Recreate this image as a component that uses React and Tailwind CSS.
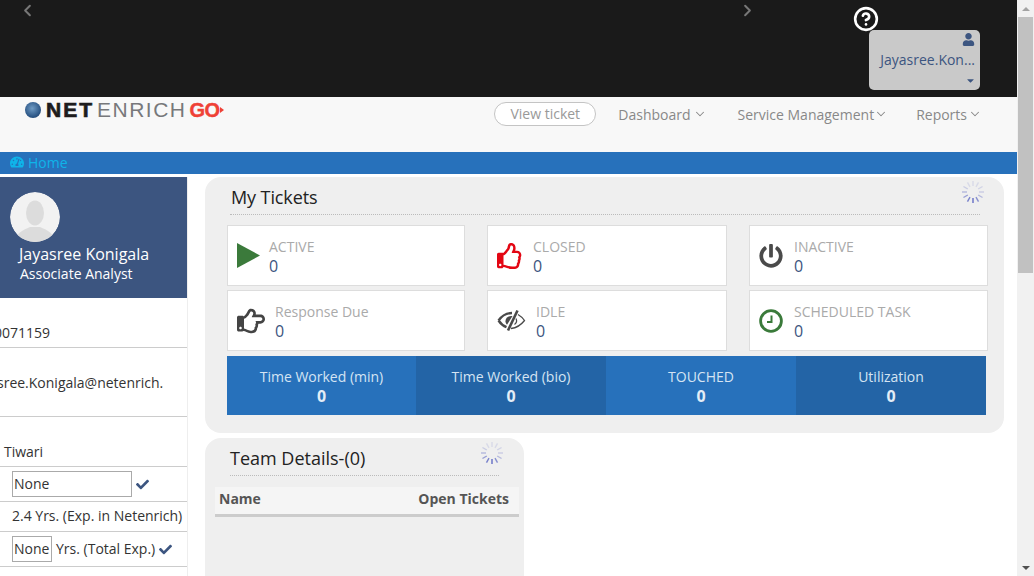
import React from 'react';
import { ChevronDown, ChevronLeft, ChevronRight, CircleHelp } from 'lucide-react';
import {
  FaCaretDown,
  FaCheck,
  FaPowerOff,
  FaRegHandPointRight,
  FaRegThumbsUp,
  FaTachometerAlt,
  FaUser,
} from 'react-icons/fa';

const font = { fontFamily: '"Open Sans", sans-serif' };

function Spinner() {
  const bars = [...Array(12).keys()];
  return (
    <svg width="24" height="24" viewBox="0 0 24 24" className="block">
      {bars.map((i) => (
        <line
          key={i}
          x1="12"
          y1="1"
          x2="12"
          y2="6"
          stroke="#5d68c4"
          strokeWidth="1.4"
          opacity={[0.15, 0.15, 0.2, 0.25, 0.4, 0.7, 0.95, 0.8, 0.6, 0.4, 0.25, 0.15][i]}
          transform={`rotate(${i * 30} 12 12)`}
        />
      ))}
    </svg>
  );
}

function ClockIcon() {
  return (
    <svg width="24" height="24" viewBox="0 0 24 24" fill="none" stroke="#3a7a3a">
      <circle cx="12" cy="12" r="10.4" strokeWidth="2.8" />
      <path d="M12.5 6.5v6.5H8" strokeWidth="2" />
    </svg>
  );
}

function PlayIcon() {
  return (
    <svg width="23" height="25" viewBox="0 0 23 25">
      <polygon points="0,0 23,12.5 0,25" fill="#3b7a3b" />
    </svg>
  );
}

function EyeSlashIcon() {
  return (
    <svg width="29" height="23" viewBox="0 0 29 23" fill="none" stroke="#4a4a4a">
      <path d="M1.5 11.5C5 6.500 10 4 15 4" strokeWidth="2.400" />
      <path d="M1.500 11.500C3.500 14.500 6.500 17 9.500 18.200" strokeWidth="2.400" />
      <path d="M21 5.500c2.500 1.500 4.800 3.500 6.500 6-3.500 4.500-8.500 7.500-13.500 8" strokeWidth="1.300" />
      <path d="M19 9.500c1 2 .5 4.500-1.500 6" strokeWidth="1.200" />
      <path d="M20.500 1.500L11 21.500" strokeWidth="2.600" />
      <path d="M15.500 7C11 6.500 8 9.500 8.500 13c.2 1.200.7 2 1.500 2.800z" fill="#4a4a4a" stroke="none" />
    </svg>
  );
}

function Avatar() {
  return (
    <svg width="50" height="50" viewBox="0 0 50 50" className="block rounded-full">
      <circle cx="25" cy="25" r="25" fill="#f2f2f2" />
      <ellipse cx="25" cy="21" rx="9" ry="12.500" fill="#dcdcdc" />
      <path d="M5 50c1-9 8-12 15-15h10c7 3 14 6 15 15z" fill="#dcdcdc" />
    </svg>
  );
}

function Logo() {
  return (
    <div className="flex items-center h-[17px] mt-[4px] ml-[25px] leading-none" style={{ fontFamily: '"Liberation Sans", sans-serif' }}>
      <span className="w-4 h-4 rounded-full bg-[radial-gradient(circle_at_45%_40%,#6f9bc4,#2b5585_65%,#1d3557)]" />
      <span className="ml-[5px] text-[21px] font-bold text-[#1e1c1d] tracking-[2px] [-webkit-text-stroke:0.7px_#1e1c1d]">NET</span>
      <span className="ml-[3px] text-[21px] text-[#77787b] tracking-[1.5px]">ENRICH</span>
      <span className="ml-[3px] text-[20px] font-bold text-[#ef4136] tracking-[-0.5px] [-webkit-text-stroke:0.4px_#ef4136]">GO</span>
      <span className="border-y-[3px] border-l-[4px] border-y-transparent border-l-[#ef4136]" />
    </div>
  );
}

function NavItem({ label, className }) {
  return (
    <span className={`flex items-center text-[14px] text-[#888] ${className}`}>
      {label}
      <ChevronDown size={14} strokeWidth={1.8} />
    </span>
  );
}

function Row({ height, className = '', children }) {
  return (
    <div className={`${height} border-b border-[#ccc] text-[14px] text-[#333] flex shrink-0 whitespace-nowrap overflow-hidden ${className}`}>
      {children}
    </div>
  );
}

function Sidebar() {
  return (
    <aside className="w-[188px] shrink-0 border-r border-[#eee] flex flex-col">
      <div className="h-[121px] bg-[#3c5580] text-white pt-[15px] pl-[10px]">
        <Avatar />
        <div className="ml-[9px] text-[16px] leading-[24px]">Jayasree Konigala</div>
        <div className="ml-[10px] text-[14px] leading-[15px]">Associate Analyst</div>
      </div>
      <Row height="h-[50px]" className="items-end pb-[4px]">
        <span className="-ml-[6px]">0071159</span>
      </Row>
      <Row height="h-[69px]" className="pt-[24px]">
        <span className="-ml-[3px]">sree.Konigala@netenrich.</span>
      </Row>
      <Row height="h-[50px]" className="items-end pb-[4px]">
        <span className="ml-[4px]">Tiwari</span>
      </Row>
      <Row height="h-[35px]" className="items-center pl-[12px] gap-[4px]">
        <span className="w-[120px] h-[26px] border border-[#aaa] pl-[1px] leading-[23px]">None</span>
        <FaCheck size={13} className="text-[#3c5580]" />
      </Row>
      <Row height="h-[30px]" className="items-center pl-[12px] pb-[2px]">
        2.4 Yrs. (Exp. in Netenrich)
      </Row>
      <Row height="h-[35px]" className="items-center pl-[12px] gap-[4px]">
        <span className="w-[40px] h-[26px] border border-[#aaa] pl-[1px] leading-[23px]">None</span>
        <span className="-mt-[2px]">Yrs. (Total Exp.)</span>
        <FaCheck size={13} className="text-[#3c5580]" />
      </Row>
    </aside>
  );
}

function TicketCard({ icon, iconWidth, label, value }) {
  return (
    <div className="bg-white border border-[#ddd] flex items-center pl-[9px]">
      <div className={`${iconWidth} shrink-0 flex items-center`}>{icon}</div>
      <div className="mt-[1px]">
        <div className="text-[14px] leading-[20px] text-[#aaa]">{label}</div>
        <div className="text-[16px] leading-[19px] font-medium text-[#3c5580]">{value}</div>
      </div>
    </div>
  );
}

function StatCell({ label, dark, width = 'flex-1' }) {
  return (
    <div className={`${width} flex flex-col items-center pt-[11px] ${dark ? 'bg-[#2364a6]' : 'bg-[#2771bb]'}`}>
      <div className="text-[14px] leading-[20px] font-medium text-[#d5e4f3]">{label}</div>
      <div className="text-[16px] leading-[18px] font-bold text-[#e3edf7]">0</div>
    </div>
  );
}

function PanelHeader({ title, width, titleClass = '', spinnerClass }) {
  return (
    <div className={`${width} ml-[25px] h-[38px] border-b border-dotted border-[#bbb] flex justify-between`}>
      <span className={`text-[18px] leading-[40px] text-[#222] ${titleClass}`}>{title}</span>
      <span className={`mt-[3px] ${spinnerClass}`}><Spinner /></span>
    </div>
  );
}

function MyTickets() {
  return (
    <section className="w-[799px] h-[256px] shrink-0 bg-[#efefef] rounded-[16px]">
      <PanelHeader title="My Tickets" width="w-[750px]" titleClass="pl-[1px] tracking-[-0.1px]" spinnerClass="-mr-[5px]" />
      <div className="ml-[22px] mt-[10px] grid grid-cols-[238px_240px_239px] grid-rows-[61px_61px] gap-x-[22px] gap-y-[4px]">
        <TicketCard icon={<PlayIcon />} iconWidth="w-[32px]" label="ACTIVE" value="0" />
        <TicketCard icon={<FaRegThumbsUp size={26} className="text-[#e30613]" />} iconWidth="w-[36px]" label="CLOSED" value="0" />
        <TicketCard icon={<FaPowerOff size={24} className="text-[#4a4a4a]" />} iconWidth="w-[35px]" label="INACTIVE" value="0" />
        <TicketCard icon={<FaRegHandPointRight size={28} className="text-[#444]" />} iconWidth="w-[38px]" label="Response Due" value="0" />
        <TicketCard icon={<EyeSlashIcon />} iconWidth="w-[39px]" label="IDLE" value="0" />
        <TicketCard icon={<ClockIcon />} iconWidth="w-[35px]" label="SCHEDULED TASK" value="0" />
      </div>
      <div className="ml-[22px] mt-[5px] w-[759px] h-[59px] flex">
        <StatCell label="Time Worked (min)" width="w-[189px]" />
        <StatCell label="Time Worked (bio)" dark />
        <StatCell label="TOUCHED" />
        <StatCell label="Utilization" dark />
      </div>
    </section>
  );
}

function TeamDetails() {
  return (
    <section className="w-[319px] h-[200px] shrink-0 bg-[#efefef] rounded-t-[16px]">
      <PanelHeader title="Team Details-(0)" width="w-[269px]" spinnerClass="-mr-[5px]" />
      <div className="ml-[10px] mr-[5px] mt-[11px] h-[30px] bg-[#f5f5f5] border-b-[3px] border-[#ccc] flex justify-between items-center px-[4px] pb-[5px] pt-[1px] text-[14px] font-bold text-[#555]">
        <span>Name</span>
        <span className="mr-[6px]">Open Tickets</span>
      </div>
    </section>
  );
}

function Scrollbar() {
  return (
    <div className="w-[17px] shrink-0 bg-[#f1f1f1] flex flex-col items-center">
      <div className="h-[17px] flex items-center justify-center">
        <span className="border-x-[4px] border-b-[4px] border-x-transparent border-b-[#a3a3a3]" />
      </div>
      <div className="w-[15px] h-[256px] bg-[#c1c1c1]" />
      <div className="flex-1" />
      <div className="h-[17px] flex items-center justify-center">
        <span className="border-x-[4px] border-t-[4px] border-x-transparent border-t-[#505050]" />
      </div>
    </div>
  );
}

export default function App() {
  return (
    <div className="w-[1034px] h-[576px] flex overflow-hidden bg-white" style={font}>
      <div className="w-[1017px] shrink-0 flex flex-col">
        <header className="h-[97px] shrink-0 bg-[#1a1a1a] flex items-start">
          <ChevronLeft size={19} strokeWidth={2.5} className="mt-[1px] ml-[18px] text-[#777]" />
          <ChevronRight size={19} strokeWidth={2.5} className="mt-[1px] ml-[701px] text-[#777]" />
          <div className="ml-[112px] flex flex-col w-[111px]">
            <CircleHelp size={26} strokeWidth={2.4} className="text-white -ml-[16px] mt-[6px] -mb-[2px]" />
            <div className="h-[60px] bg-[#c9c9c9] rounded-[5px] flex flex-col items-end pr-[5px] text-[#3c5580]">
              <FaUser size={13} className="mt-[3px]" />
              <span className="text-[14px] leading-[20px] mt-[4px]">Jayasree.Kon...</span>
              <FaCaretDown size={11} className="mt-[5px] mr-[-1px]" />
            </div>
          </div>
        </header>

        <nav className="h-[55px] shrink-0 bg-[#f8f8f8] flex items-start">
          <Logo />
          <div className="ml-auto mr-[35px] flex items-center gap-[31px] mt-[5px]">
            <span className="w-[102px] h-[24px] -mr-[9px] border border-[#c4c4c4] rounded-full text-[14px] leading-[22px] text-center text-[#999] bg-white">View ticket</span>
            <NavItem label="Dashboard" className="gap-[2px]" />
            <NavItem label="Service Management" className="-mr-[3px]" />
            <NavItem label="Reports" className="gap-[1px]" />
          </div>
        </nav>

        <div className="h-[22px] shrink-0 bg-[#2771bb] flex items-center pl-[10px] pb-[2px] gap-[4px] text-[14px] text-[#0fb4e9]">
          <FaTachometerAlt size={14} />
          Home
        </div>

        <div className="flex-1 mt-[3px] flex min-h-0">
          <Sidebar />
          <main className="ml-[17px] flex flex-col gap-[5px]">
            <MyTickets />
            <TeamDetails />
          </main>
        </div>
      </div>
      <Scrollbar />
    </div>
  );
}
